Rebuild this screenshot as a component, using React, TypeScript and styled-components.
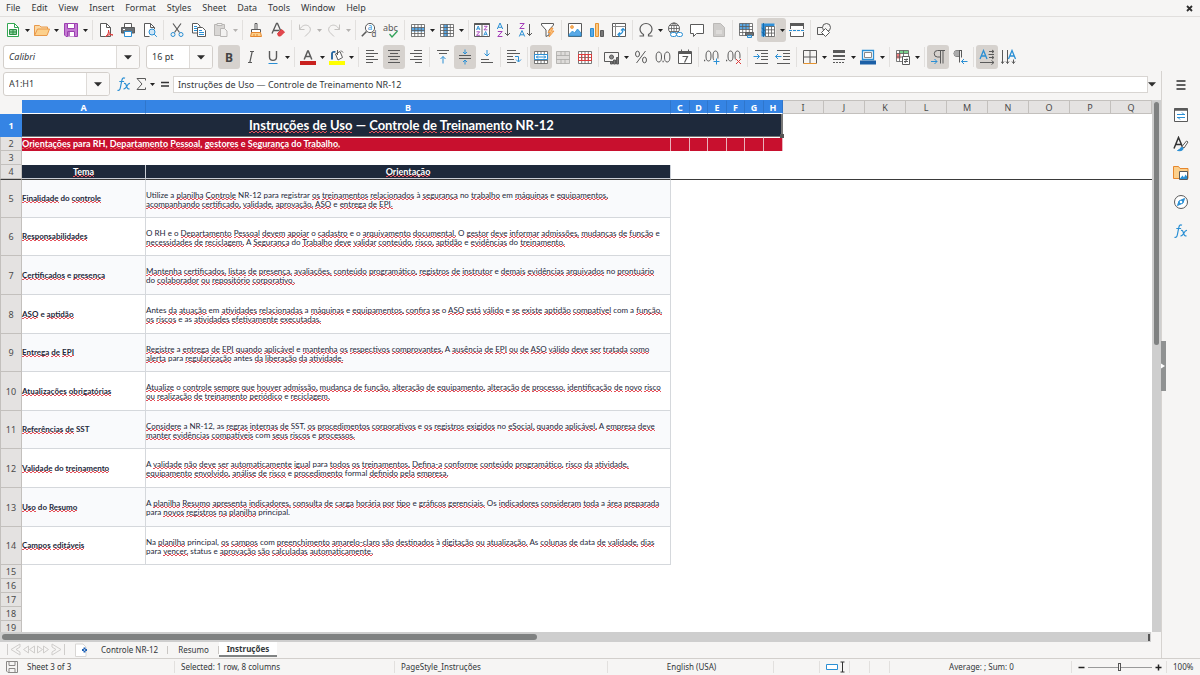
import React from 'react';
import styled, { createGlobalStyle, css } from 'styled-components';

const GlobalStyle = createGlobalStyle`
  *, *::before, *::after { box-sizing: border-box; }
  html, body { margin: 0; height: 100%; }
  body {
    background: #f6f5f4;
    color: #33373a;
    font-family: "Noto Sans", sans-serif;
    font-size: 9px;
    line-height: 12px;
    overflow: hidden;
  }
  button, input, select { font: inherit; color: inherit; margin: 0; padding: 0; border: 0; background: none; outline: none; }
  svg { display: block; flex: none; }
`;

/* ---------- frame ---------- */

const Window = styled.div`
  display: flex;
  flex-direction: column;
  height: 100vh;
`;

const MenuBar = styled.nav`
  display: flex;
  align-items: center;
  flex: none;
  height: 17px;
  padding: 0 6px;
  gap: 11px;
  border-bottom: 1px solid #e1dfdd;
`;

const MenuItem = styled.button`
  white-space: nowrap;
`;

const CloseButton = styled.button`
  margin-left: auto;
`;

const Toolbar = styled.div<{ $height: number }>`
  display: flex;
  align-items: center;
  flex: none;
  height: ${(p) => p.$height}px;
  padding-left: 2px;
`;

const ToolButton = styled.button<{ $on?: boolean; $split?: boolean }>`
  display: flex;
  align-items: center;
  justify-content: center;
  flex: none;
  width: 22px;
  height: 24px;
  border-radius: ${(p) => (p.$split ? '3px 0 0 3px' : '3px')};
  background: ${(p) => (p.$on ? '#d6d2ce' : 'none')};
`;

const Separator = styled.span`
  flex: none;
  width: 1px;
  height: 20px;
  margin: 0 2px;
  background: #e2e0de;
`;

const CaretButton = styled.button<{ $on?: boolean }>`
  display: flex;
  align-items: center;
  justify-content: center;
  flex: none;
  width: 7px;
  height: 24px;
  border-radius: 0 3px 3px 0;
  background: ${(p) => (p.$on ? '#d6d2ce' : 'none')};
  & + ${Separator} { margin-left: 3px; }
`;

const Combo = styled.div<{ $width: number }>`
  display: flex;
  flex: none;
  width: ${(p) => p.$width}px;
  height: 24px;
  margin: 0 5px 0 1px;
  border: 1px solid #d3cfcb;
  border-radius: 3px;
  background: #fff;
  overflow: hidden;
`;

const ComboInput = styled.input<{ $italic?: boolean }>`
  flex: 1;
  min-width: 0;
  padding-left: 5px;
  font-style: ${(p) => (p.$italic ? 'italic' : 'normal')};
`;

const ComboArrow = styled.button`
  display: flex;
  align-items: center;
  justify-content: center;
  width: 23px;
  border-left: 1px solid #dedbd8;
  background: #f9f8f7;
`;

const Lower = styled.div`
  display: flex;
  flex: 1;
  min-height: 0;
`;

const Document = styled.main`
  display: flex;
  flex-direction: column;
  flex: 1;
  min-width: 0;
`;

const FormulaBar = styled.div`
  display: flex;
  align-items: center;
  flex: none;
  height: 29px;
  padding: 0 5px 3px 2px;
`;

const FormulaTool = styled.button`
  display: flex;
  align-items: center;
  justify-content: center;
  width: 17px;
  height: 20px;
`;

const FormulaInput = styled.input`
  flex: 1;
  min-width: 0;
  height: 17px;
  padding-left: 4px;
  border: 1px solid #d8d5d2;
  background: #fff;
`;

const ExpandButton = styled.button`
  display: flex;
  justify-content: center;
  width: 8px;
`;

/* ---------- sheet ---------- */

const SheetArea = styled.div`
  display: flex;
  flex: 1;
  min-height: 0;
`;

const Viewport = styled.div`
  flex: 1;
  min-width: 0;
  overflow: hidden;
  background: #fff;
`;

const Grid = styled.table`
  width: 100%;
  table-layout: fixed;
  border-collapse: separate;
  border-spacing: 0;
  color: #1e293b;
  font-family: Lato, Carlito, sans-serif;
  font-size: 8px;
  line-height: 9px;
  td, th { padding: 0; }
`;

const selectedHeader = css`
  background: #3584e4;
  color: #fff;
  font-weight: 700;
`;

const ColumnHeader = styled.th<{ $selected?: boolean }>`
  height: 14px;
  border: solid #c3c0bd;
  border-width: 1px 1px 1px 0;
  background: #e4e2e1;
  color: #4b4b4b;
  font: 400 9px/11px "Noto Sans", sans-serif;
  ${(p) => p.$selected && selectedHeader}
  ${(p) => p.$selected && 'border-color: #3584e4 #2f76cc #fff #3584e4;'}
`;

const Corner = styled.td`
  background: #f6f5f4;
`;

const RowHeader = styled.th<{ $selected?: boolean }>`
  border: solid #c3c0bd;
  border-width: 0 1px 1px 1px;
  background: #e4e2e1;
  color: #4b4b4b;
  font: 400 9px/11px "Noto Sans", sans-serif;
  ${(p) => p.$selected && selectedHeader}
  ${(p) => p.$selected && 'border-color: #3584e4;'}
`;

const Row = styled.tr<{ $height: number; $frozenEdge?: boolean }>`
  height: ${(p) => p.$height}px;
  ${(p) => p.$frozenEdge && '&& > * { border-top: 1px solid #3a3a3a; }'}
`;

const TitleCell = styled.td`
  position: relative;
  border: solid #777;
  border-width: 0 2px 1px 0;
  background: #1e293b;
  color: #fff;
  font-size: 13px;
  font-weight: 700;
  line-height: 16px;
  text-align: center;
`;

const FillHandle = styled.span`
  position: absolute;
  right: -3px;
  bottom: -2px;
  width: 4px;
  height: 4px;
  background: #555;
`;

const BannerCell = styled.td`
  border: solid #e9b3bb;
  border-width: 1px 1px 0 0;
  border-top-color: #fff;
  background: #c8102e;
  color: #fff;
  font-size: 9px;
  font-weight: 700;
  line-height: 11px;
  vertical-align: top;
  white-space: nowrap;
`;

const HeadCell = styled.td`
  border: solid #c9ced6;
  border-width: 0 1px 1px 0;
  background: #1e293b;
  color: #fff;
  font-size: 9px;
  font-weight: 700;
  line-height: 11px;
  text-align: center;
`;

const BodyCell = styled.td<{ $tinted: boolean; $bold?: boolean }>`
  border: solid #d5d8dc;
  border-width: 0 1px 1px 0;
  background: ${(p) => (p.$tinted ? '#f9fafc' : '#fff')};
  font-weight: ${(p) => (p.$bold ? 700 : 400)};
  white-space: nowrap;
`;

const Lines = styled.div`
  padding-top: 2px;
`;

const Misspelled = styled.span`
  background:
    linear-gradient(90deg, #e4505a 2px, transparent 2px) 0 100% / 4px 1px repeat-x,
    linear-gradient(90deg, transparent 2px, #e4505a 2px) 0 calc(100% - 1px) / 4px 1px repeat-x;
`;

const VerticalTrack = styled.div`
  flex: none;
  width: 9px;
  padding: 2px;
  background: #cecece;
`;

const VerticalThumb = styled.div`
  width: 5px;
  height: 46%;
  border-radius: 3px;
  background: #7f8181;
`;

const HorizontalTrack = styled.div`
  display: flex;
  flex: none;
  justify-content: space-between;
  align-items: center;
  height: 10px;
  margin-right: 10px;
  padding: 0 1px 0 2px;
  background: #cecece;
`;

const HorizontalThumb = styled.div`
  width: 46.6%;
  height: 6px;
  border-radius: 3px;
  background: #7f8181;
`;

const SplitGrip = styled.div`
  width: 2px;
  height: 7px;
  background: #555;
`;

const TabBar = styled.div`
  display: flex;
  flex: none;
  height: 16px;
  padding: 0 0 1px 6px;
`;

const TabNav = styled.button`
  display: flex;
  align-items: center;
  width: 15px;
`;

const AddSheet = styled.button`
  margin: 0 3px 0 9px;
`;

const Tab = styled.button<{ $active?: boolean }>`
  padding: 0 10px;
  font-size: 8px;
  line-height: 15px;
  white-space: nowrap;
  ${(p) =>
    p.$active
      ? 'padding: 0 8px; background: #fff; font-weight: 700; border-bottom: 2px solid #808383; line-height: 13px;'
      : 'background: linear-gradient(#c9c6c3, #c9c6c3) 100% 50% / 1px 8px no-repeat;'}
`;

/* ---------- sidebar and status bar ---------- */

const Sidebar = styled.aside`
  position: relative;
  display: flex;
  flex-direction: column;
  align-items: center;
  flex: none;
  width: 39px;
  padding-top: 2px;
  border-left: 1px solid #d6d3d0;
`;

const SidebarButton = styled.button`
  display: flex;
  align-items: center;
  justify-content: center;
  width: 29px;
  height: 29px;
  &:first-child { height: 24px; margin-bottom: 3px; }
`;

const SidebarHandle = styled.button`
  position: absolute;
  left: -1px;
  top: 46%;
  display: flex;
  align-items: center;
  width: 5px;
  height: 50px;
  background: #909292;
`;

const StatusBar = styled.footer`
  display: grid;
  grid-template-columns: 175px 220fr 213fr 166fr 46px 30px 20px 20px 182fr 95px 33px;
  align-items: center;
  flex: none;
  height: 17px;
  border-top: 1px solid #d2cfcc;
  font-size: 8px;
`;

const StatusCell = styled.div<{ $center?: boolean; $gap?: number }>`
  display: flex;
  align-items: center;
  justify-content: ${(p) => (p.$center ? 'center' : 'flex-start')};
  gap: ${(p) => p.$gap ?? 0}px;
  height: 12px;
  padding: 0 4px 0 6px;
  white-space: nowrap;
  border-right: 1px solid #e2e0de;
  &:last-child { border-right: 0; }
`;

const ZoomRange = styled.input`
  appearance: none;
  flex: 1;
  min-width: 0;
  height: 10px;
  background: linear-gradient(#9a9a9a, #9a9a9a) 0 50% / 100% 1px no-repeat;
  &::-webkit-slider-thumb {
    appearance: none;
    width: 3px;
    height: 8px;
    border: 1px solid #555;
    background: #f6f5f4;
  }
`;

/* ---------- icons ---------- */

const K = '#5a5a5a';
const B = '#2a8fd4';
const R = '#dd3b3b';
const SANS = '"Noto Sans", sans-serif';

const Svg = ({ children, w = 16, h = 16 }: { children: React.ReactNode; w?: number; h?: number }) => (
  <svg width={w} height={h} viewBox={`0 0 ${w} ${h}`} fill="none" stroke={K} strokeWidth="1" aria-hidden="true">
    {children}
  </svg>
);

const Caret = ({ dim, big }: { dim?: boolean; big?: boolean }) =>
  big ? (
    <svg width="8" height="5" viewBox="0 0 8 5" aria-hidden="true"><path d="M0 .3h8L4 4.6z" fill="#2e2e2e" /></svg>
  ) : (
    <svg width="5" height="3" viewBox="0 0 5 3" aria-hidden="true"><path d="M0 0h5L2.500 3z" fill={dim ? '#b5b3b1' : '#222'} /></svg>
  );

const sheetGrid = (color = K) => (
  <path stroke={color} strokeWidth=".8" d="M1.500 2.500h13v12h-13zM1.500 5.500h13M1.500 8.500h13M1.500 11.500h13M4.700 2.500v12M8 2.500v12M11.300 2.500v12" />
);

const icons: Record<string, React.ReactNode> = {
  new: (
    <Svg>
      <path d="M2.500 1.500h7l4 4v9h-11z" fill="#fff" stroke="#34a853" />
      <path d="M9.500 1.500v4h4" stroke="#34a853" />
      <path d="M4.500 7.500h7v5h-7zM4.500 10h7M8 7.500v5" stroke="#2c8f45" fill="#8fd3a1" />
    </Svg>
  ),
  open: (
    <Svg>
      <path d="M.5 13.500v-10h5l1.500 1.500h6.500v3" fill="#fbd9a5" stroke="#e9994a" />
      <path d="M.5 13.500 3.500 7h12l-2.500 6.500z" fill="#fcd08c" stroke="#e9994a" />
    </Svg>
  ),
  save: (
    <Svg>
      <path d="M1.500 1.500h13v13H3l-1.500-1.500z" fill="#c57bd3" stroke="#9c3fb0" />
      <path d="M4.500 1.500h7v5h-7z" fill="#fff" stroke="#9c3fb0" />
      <path d="M4.500 14.500v-5h7v5" fill="#fff" stroke="#9c3fb0" />
      <path d="M6 10v4" stroke="#9c3fb0" strokeWidth="1.500" />
    </Svg>
  ),
  pdf: (
    <Svg>
      <path d="M2.500 1.500h6l4 4v9h-10z" fill="#fff" />
      <path d="M8.500 1.500v4h4" />
      <path d="M7.500 14.500c2-1 3.500-4 3-6.500 0 3 2 5 4.500 5-2.500-1-5 0-7.500 1.500z" stroke={R} fill="#f5b5b5" />
    </Svg>
  ),
  print: (
    <Svg>
      <path d="M4.500 5.500v-4h7v4" fill="#fff" />
      <path d="M1.500 5.500h13v5.500h-13z" fill="#6b6f73" />
      <path d="M4.500 9.500h7v5h-7z" fill="#fff" stroke={B} />
      <path d="M3 7.500h2" stroke="#fff" />
    </Svg>
  ),
  preview: (
    <Svg>
      <path d="M12.500 7V5.500l-4-4h-6v13h5" fill="#fff" />
      <path d="M8.500 1.500v4h4" />
      <circle cx="10" cy="10" r="3" stroke={B} fill="#cfe6f7" />
      <path d="m12.200 12.200 2.600 2.600" stroke={B} />
    </Svg>
  ),
  cut: (
    <Svg>
      <path d="m4 1.500 6.500 9M12 1.500 5.500 10.500" strokeWidth="1.200" />
      <circle cx="4" cy="12.500" r="2" stroke={B} />
      <circle cx="12" cy="12.500" r="2" stroke={B} />
    </Svg>
  ),
  copy: (
    <Svg>
      <path d="M1.500 1.500h5l2.500 2.500v7H1.500z" fill="#fff" />
      <path d="M3 4.500h3M3 6.500h3M3 8.500h3" stroke={B} />
      <path d="M6.500 5.500h5l3 3v6h-8z" fill="#fff" />
      <path d="M8 8.500h3M8 10.500h5M8 12.500h5" stroke={B} />
    </Svg>
  ),
  paste: (
    <Svg>
      <path d="M1.500 2.500h10v11h-10z" fill="#d9d7d5" stroke="#b9b7b5" />
      <path d="M4 1.500h5v2H4z" fill="#f6f5f4" stroke="#b9b7b5" />
      <path d="M7.500 6.500h4l2.500 2.500v5.500H7.500z" fill="#f3f2f1" stroke="#b9b7b5" />
    </Svg>
  ),
  clone: (
    <Svg>
      <path d="M7 1.500h2v6H7z" fill="#fff" />
      <path d="M3.500 7.500h9v3h-9z" fill="#fff" />
      <path d="M3.500 10.500h9l1 4h-11z" fill="#fcd08c" stroke="#e6872d" />
      <path d="M6 14v-2M9 14v-2" stroke="#e6872d" />
    </Svg>
  ),
  clear: (
    <Svg>
      <path d="m2 11.500 4.500-10h1l4 9M3.500 8.500h6" strokeWidth="1.300" />
      <path d="m7.500 11.500 4-4 3 2.500-4 4h-2z" fill="#e2474f" stroke={R} />
    </Svg>
  ),
  undo: (
    <Svg>
      <path d="M2.500 2.500v5h5M2.500 7.500C5 3.500 8 2.500 10.500 3.500c3.500 1.500 3.500 5 1.500 7l-4 4" stroke="#c4c2c0" />
    </Svg>
  ),
  redo: (
    <Svg>
      <path d="M13.500 2.500v5h-5M13.500 7.500C11 3.500 8 2.500 5.500 3.500c-3.500 1.500-3.500 5-1.500 7l4 4" stroke="#c4c2c0" />
    </Svg>
  ),
  find: (
    <Svg>
      <circle cx="9" cy="6" r="4.600" fill="#fff" />
      <path d="M5.500 9.500.8 14.200" strokeWidth="1.600" />
      <text x="6.800" y="8.300" fontSize="8" fill={B} stroke="none" fontFamily={SANS}>a</text>
      <text x="10.500" y="15" fontSize="8" fill={K} stroke="none" fontFamily={SANS}>d</text>
    </Svg>
  ),
  spell: (
    <Svg w={18}>
      <text x="1" y="9" fontSize="9" fill={K} stroke="none" fontFamily={SANS}>abc</text>
      <path d="m7.500 12 2.500 3 5.500-6" stroke="#32a35a" strokeWidth="1.300" />
    </Svg>
  ),
  row: (
    <Svg>
      <path d="M1.500 1.500h13v13h-13z" fill="#fff" stroke="none" />
      <path d="M1.500 5.500h13v4h-13z" fill="#5aa9e6" stroke="none" />
      {sheetGrid()}
    </Svg>
  ),
  col: (
    <Svg>
      <path d="M1.500 2.500h13v12h-13z" fill="#fff" stroke="none" />
      <path d="M5 2.500h4v12H5z" fill="#5aa9e6" stroke="none" />
      {sheetGrid()}
    </Svg>
  ),
  sort: (
    <Svg>
      <path d="M.5 1.500h15v13H.5z" fill="#fff" />
      <path d="M.5 2h15" strokeWidth="2" />
      <path d="M8 2v12" />
      <g strokeWidth=".9">
        <path d="m2.500 8 1.700-4 1.700 4M3 6.800h2.400M9.800 13.500l1.800-4 1.800 4M10.300 12.300h2.600" stroke={B} />
        <path d="M2.500 9.800h3.200l-3.200 3.500h3.400M10 4.300h3.200L10 7.800h3.400" stroke="#a33bb8" />
      </g>
    </Svg>
  ),
  asc: (
    <Svg>
      <path d="M1.300 7 4 1l2.700 6M2.200 5.300h3.600" stroke={B} />
      <path d="M1.800 9.500h4.400l-4.400 5h4.600" stroke="#a33bb8" />
      <path d="M11.500 2v11.500M9 11l2.500 2.500L14 11" />
    </Svg>
  ),
  desc: (
    <Svg>
      <path d="M1.800 1.500h4.400l-4.400 5h4.600" stroke="#a33bb8" />
      <path d="M1.300 14.500 4 8.500l2.700 6M2.200 12.800h3.600" stroke={B} />
      <path d="M11.500 2v11.500M9 11l2.500 2.500L14 11" />
    </Svg>
  ),
  filter: (
    <Svg>
      <path d="M1.500 1.500h12v1.500l-4.500 5v5l-3 1.500V8L1.500 3z" fill="#fff" />
      <path d="m11 6-3 4.500h2.500L9 15l5-6h-2.500l1.500-3z" fill="#fcc07a" stroke="#ee9036" strokeWidth=".8" />
    </Svg>
  ),
  image: (
    <Svg>
      <path d="M1.500 1.500h13v13h-13z" fill="#fff" />
      <circle cx="5" cy="5" r="1.500" fill="#f7b25c" stroke="#ee9036" strokeWidth=".7" />
      <path d="M2 12.500 5.500 9l2 2 3-4 3.500 4v3H2z" fill="#5aa9e6" stroke={B} strokeWidth=".8" />
    </Svg>
  ),
  chart: (
    <Svg>
      <path d="M1.500 6.500h3v8h-3z" fill="#5aa9e6" stroke={B} />
      <path d="M6.500 1.500h3v13h-3z" fill="#fbc883" stroke="#e6932f" />
      <path d="M11.500 8.500h3v6h-3z" fill="#777" />
    </Svg>
  ),
  pivot: (
    <Svg>
      <path d="M1.500 1.500h13v13h-13z" fill="#fff" />
      <path d="M4.500 1.500v13M1.500 4.500h13" stroke="#888" />
      <path d="M7 12.500c3 0 5-2 5-5.500M10 8.500l2-2 2 2M9 10.500l-2 2 2 2" stroke={B} strokeWidth="1.200" />
    </Svg>
  ),
  omega: (
    <Svg>
      <path d="M1.500 14h4v-1.500C3 11 2 9 2 7a6 5.500 0 0 1 12 0c0 2-1 4-3.500 5.500V14h4" strokeWidth="1.200" />
    </Svg>
  ),
  link: (
    <Svg>
      <circle cx="7" cy="6.500" r="5.500" fill="#fff" />
      <path d="M1.500 6.500h11M7 1v11M2.500 3.500h9M2.500 9.500h9" strokeWidth=".8" />
      <ellipse cx="7" cy="6.500" rx="2.600" ry="5.500" strokeWidth=".8" />
      <rect x="3.500" y="10.500" width="6" height="4" rx="2" fill="#fff" stroke={B} />
      <rect x="9.500" y="10.500" width="6" height="4" rx="2" fill="#fff" stroke={B} />
    </Svg>
  ),
  comment: (
    <Svg>
      <path d="M1.500 2.500h13v9H7.500l-3 3v-3h-3z" fill="#fff" />
    </Svg>
  ),
  header: (
    <Svg>
      <path d="M2.500 1.500h7l4 4v9h-11z" fill="#cfcdcb" stroke="#bbb9b7" />
      <path d="M5 8h6v4H5z" fill="#dddbd9" stroke="none" />
    </Svg>
  ),
  area: (
    <Svg>
      <path d="M1.500 1.500h13v12h-13z" fill="#fff" stroke="none" />
      <path d="M1.500 1.500h9.500v6H1.500z" fill="#5aa9e6" stroke="none" />
      <path strokeWidth=".8" d="M1.500 1.500h13v12h-13zM1.500 4.500h13M1.500 7.500h13M1.500 10.500h13M4.700 1.500v12M8 1.500v12M11.300 1.500v12" />
      <path d="M7.500 10.500h8v3h-8z" fill="#6b6f73" />
      <path d="M9.500 13.500h4v2h-4z" fill="#cfe6f7" stroke={B} />
    </Svg>
  ),
  freeze: (
    <Svg>
      <path d="M2.500 2.500h13v12h-13z" fill="#fff" stroke="none" />
      <path d="M1.500 1.500h13v3h-9v10h-4z" fill="#2f8fd8" stroke="none" />
      <path strokeWidth=".8" d="M5.500 4.500h9v10h-9zM5.500 7.800h9M5.500 11.100h9M8.500 4.500v10M11.500 4.500v10" />
      <path d="M3.500 1v14M1.500 6l4 3M1.500 10l4 3" stroke="#125e9c" strokeWidth=".8" />
    </Svg>
  ),
  split: (
    <Svg>
      <path d="M1.500 14.500v-13h13v13z" fill="#fff" />
      <path d="M1 2.500h14" strokeWidth="3" />
      <path d="M0 8.500h16" stroke="#f6f5f4" strokeWidth="3" />
      <path d="M0 8.500h16" stroke={B} strokeDasharray="3 1" />
    </Svg>
  ),
  shapes: (
    <Svg>
      <path d="M1.500 5.500h8v7h-8z" />
      <circle cx="10.500" cy="5.500" r="4" fill="#f6f5f4" />
      <path d="m9.500 6.500 4 4-4 4-4-4z" fill="#fff" />
    </Svg>
  ),
  bold: (
    <Svg><text x="8" y="12.500" textAnchor="middle" fontSize="12" fontWeight="700" fill="#444" stroke="none" fontFamily={SANS}>B</text></Svg>
  ),
  italic: (
    <Svg><path d="M7 2.500h4M5 13.500h4M9.200 2.500 6.800 13.500" strokeWidth="1.200" /></Svg>
  ),
  underline: (
    <Svg>
      <path d="M4.500 2v6c0 4.500 7 4.500 7 0V2" strokeWidth="1.400" />
      <path d="M3.500 14.500h9" stroke={B} />
    </Svg>
  ),
  fontcolor: (
    <Svg>
      <path d="m4.200 10.500 3.500-8.500h.6l3.500 8.500M5.300 7.500h5.400" strokeWidth="1.500" />
      <path d="M0 14h16" stroke="#c9211e" strokeWidth="4" />
    </Svg>
  ),
  highlight: (
    <Svg>
      <path d="m6.500 5 4.500-2.500 2.500 6-4.500 2.500z" fill="#fff" />
      <path d="M8.500 1v5M12 1.500l2 2" />
      <path d="M3 10.500V4.500c0-1.500 1.500-2 3.500-1.500" stroke="#1c5f9c" strokeWidth="1.800" />
      <path d="M0 14h16" stroke="#ffff00" strokeWidth="4" />
    </Svg>
  ),
  left: <Svg><path d="M2 1.500h8M2 4.500h12M2 7.500h8M2 10.500h12M2 13.500h7" /></Svg>,
  center: <Svg><path d="M2 1.500h12M4 4.500h8M2 7.500h12M4 10.500h8M2 13.500h12" /></Svg>,
  right: <Svg><path d="M6 1.500h8M2 4.500h12M6 7.500h8M2 10.500h12M7 13.500h7" /></Svg>,
  top: (
    <Svg>
      <path d="M2 1.500h12M4 4.500h8" />
      <path d="M8 14.500v-7M5.500 10 8 7.500l2.500 2.500" stroke={B} />
    </Svg>
  ),
  middle: (
    <Svg>
      <path d="M2 6.500h12M2 9.500h12" />
      <path d="M8 .5v4.500M6 3l2 2 2-2M8 15.500V11M6 13l2-2 2 2" stroke={B} />
    </Svg>
  ),
  bottom: (
    <Svg>
      <path d="M2 10.500h8M2 13.500h12" />
      <path d="M8 1v6M5.500 4.500 8 7l2.500-2.500" stroke={B} />
    </Svg>
  ),
  wrap: (
    <Svg>
      <path d="M1 1.500h9M1 4.500h13M1 7.500h6M1 10.500h7M1 13.500h9" />
      <path d="M9 7.500h3.500v5M10 10.500l2.500 2.500 2.500-2.500" stroke={B} />
    </Svg>
  ),
  merge: (
    <Svg>
      <path d="M1.500 2.500h13v12h-13z" fill="#fff" stroke="none" />
      {sheetGrid()}
      <path d="M1.500 5.500h13v5h-13z" fill="#fff" stroke={B} />
      <path d="M3 8h10M5 6.500 3.500 8 5 9.500M11 6.500 12.500 8 11 9.500" stroke={B} />
    </Svg>
  ),
  mergeOff: (
    <Svg>
      <path d="M1.500 2.500h13v12h-13z" fill="#dedcda" stroke="none" />
      <path stroke="#aaa8a6" strokeWidth=".8" d="M1.500 2.500h13v12h-13zM1.500 6.500h13M1.500 10.500h13M6 2.500v4M10 2.500v4M6 10.500v4M10 10.500v4" />
    </Svg>
  ),
  unmerge: (
    <Svg>
      <path d="M1.500 2.500h13v12h-13z" fill="#fff" stroke="none" />
      {sheetGrid()}
      <path d="M1.500 5.500h13v6h-13zM4.700 5.500v6M8 5.500v6M11.300 5.500v6" stroke={R} />
    </Svg>
  ),
  currency: (
    <Svg>
      <path d="M.5 3.500h14v9H.5z" />
      <circle cx="7.500" cy="8" r="2" fill="#888" />
      <path d="M9.500 11h2v4h-2zM12.500 8.500h2v6.500h-2zM6.500 12.500h2V15h-2z" fill="#777" />
    </Svg>
  ),
  percent: (
    <Svg>
      <path d="m12.500 2-9 12" />
      <ellipse cx="4.500" cy="5" rx="2" ry="2.800" />
      <ellipse cx="11.500" cy="11" rx="2" ry="2.800" />
    </Svg>
  ),
  number: (
    <Svg>
      <ellipse cx="3.800" cy="8" rx="2.700" ry="5" />
      <ellipse cx="12.200" cy="8" rx="2.700" ry="5" />
      <path d="M7.500 12.500h1.200" strokeWidth="1.300" />
    </Svg>
  ),
  date: (
    <Svg>
      <path d="M1.500 2.500h13v12h-13z" fill="#fff" />
      <path d="M1.500 4h13" strokeWidth="2" />
      <path d="M4.500.5v3M11.500.5v3" />
      <path d="M5.500 7.500h5L7.500 13.500" strokeWidth="1.200" />
    </Svg>
  ),
  decAdd: (
    <Svg>
      <ellipse cx="4.500" cy="7" rx="2.500" ry="5" />
      <ellipse cx="11.500" cy="7" rx="2.500" ry="5" />
      <path d="M0 11.500h1.200" strokeWidth="1.300" />
      <path d="M12.500 9.500v6M9.500 12.500h6" stroke="#f6f5f4" strokeWidth="3" />
      <path d="M12.500 9.500v6M9.500 12.500h6" stroke={B} />
    </Svg>
  ),
  decDel: (
    <Svg>
      <ellipse cx="4.500" cy="7" rx="2.500" ry="5" />
      <ellipse cx="11.500" cy="7" rx="2.500" ry="5" />
      <path d="M0 11.500h1.200" strokeWidth="1.300" />
      <path d="m10 10 5 5M15 10l-5 5" stroke="#f6f5f4" strokeWidth="3" />
      <path d="m10 10 5 5M15 10l-5 5" stroke={R} />
    </Svg>
  ),
  indent: (
    <Svg>
      <path d="M2 1.500h13M8 4.500h7M8 7.500h7M8 10.500h7M2 14.500h13" />
      <path d="M.5 7.500h6M4 5l2.500 2.500L4 10" stroke={B} />
    </Svg>
  ),
  outdent: (
    <Svg>
      <path d="M2 1.500h13M8 4.500h7M8 7.500h7M8 10.500h7M2 14.500h13" />
      <path d="M6.500 7.500h-6M3 5 .5 7.500 3 10" stroke={B} />
    </Svg>
  ),
  borders: (
    <Svg>
      <path d="M1.500 14.500v-13h13v13M8 1.500v13M1.500 8h13" />
      <path d="M1.500 14.500h13" stroke="#e6932f" />
    </Svg>
  ),
  lines: (
    <Svg>
      <path d="M2 2.500h12" strokeWidth="3" />
      <path d="M2 7h12" strokeWidth="2" />
      <path d="M2 10.500h12" />
      <path d="M2 13.500h12" strokeDasharray="2 1" />
    </Svg>
  ),
  linecolor: (
    <Svg w={18}>
      <path d="M3.500 1.500h11v9h-11z" fill="#fff" stroke={B} strokeWidth="1.300" />
      <path d="M5.500 3.500h7v5h-7z" stroke="#888" />
      <path d="M1 13.500h16" stroke="#1b5fa6" strokeWidth="4" />
    </Svg>
  ),
  cond: (
    <Svg>
      <path d="M1.500 1.500h12v11h-12z" fill="#fff" stroke="none" />
      <path d="M4.500 1.500h9v3h-9z" fill="#7bd08d" stroke="none" />
      <path d="M1.500 4.500h4v5h-4z" fill="#ef7b7b" stroke="none" />
      <path d="M1.500 1.500h12v11h-12zM1.500 4.500h12M1.500 8h12M4.500 1.500v11M8.500 1.500v11" strokeWidth=".8" />
      <path d="M7.500 7.500h7v8h-7z" fill="#fff" />
      <path d="M9 10.500h4M9 12.500h4M12 9.500l-2 4.500" />
    </Svg>
  ),
  ltr: (
    <Svg>
      <path d="M15 1.500H7.500a3 3 0 0 0 0 6.500H10M10.500 1.500v13M13 1.500v13" />
      <path d="M1 12.500h6M4.500 10 7 12.500 4.500 15" stroke={B} />
    </Svg>
  ),
  rtl: (
    <Svg>
      <path d="M10 1.500H5a3 3 0 0 0 0 6h2M7.500 1.500v12M9.500 1.500v7" />
      <path d="M5 1.500a3 3 0 0 0 0 6h2v-6z" fill="#aaa" stroke="none" />
      <path d="M15.500 12.500h-6M12 10l-2.500 2.500L12 15" stroke={B} />
    </Svg>
  ),
  horiz: (
    <Svg>
      <path d="M1 10 4.500 1.500 8 10M2.200 7h4.600" stroke={B} strokeWidth="1.300" />
      <path d="M10 2.500h5M10 8.500h5M13 1l2 1.500L13 4M13 7l2 1.500L13 10M1 13.500h14M12.500 11.500l2.500 2-2.500 2M9.500 5.500h5.500" />
    </Svg>
  ),
  vert: (
    <Svg>
      <path d="M7.500 10 11 1.500l3.500 8.500M8.700 7h4.600" stroke={B} strokeWidth="1.300" />
      <path d="M1.500 1v13.500M6.500 1v13.500M0 12.500l1.500 2 1.500-2M5 12.500l1.500 2 1.500-2M12.500 10.500v4M11 12.500l1.500 2 1.500-2" />
    </Svg>
  ),
  fx: (
    <Svg>
      <path d="M9 2.200c-1.800-1-2.800.2-3.200 2.300L4.300 12c-.4 2-1.300 2.800-2.800 2.200M3.300 5.500h4.800" stroke={B} strokeWidth="1.200" />
      <path d="M8 7.500c1.500-.5 2 .5 2.500 2.500s1.200 3.500 3 2.700M14 7.500c-1.500-.3-2.200 1-3.200 2.700S9 13.300 7.500 12.800" stroke={B} strokeWidth="1.200" />
    </Svg>
  ),
  sigma: <Svg><path d="M12.500 4.500v-2H4l5 5.500-5 5.500h8.500v-2" /></Svg>,
  equals: <Svg><path d="M4 6.500h8M4 10h8" stroke="#333" strokeWidth="1.600" /></Svg>,
  menu: <Svg><path d="M3.500 4h9M3.500 8h9M3.500 12h9" stroke="#2e2e2e" strokeWidth="1.500" /></Svg>,
  props: (
    <Svg>
      <path d="M1.500 1.500h13v13h-13z" fill="#fff" />
      <path d="M1.500 2.500h13" strokeWidth="2.500" />
      <path d="M4 7.500h8M4 10.500h8M9 5.500 11 7.500M7 12.500 5 10.500" stroke={B} />
    </Svg>
  ),
  styles: (
    <Svg>
      <path d="M1 12.500 5.500 1.500 9.500 11M2.500 8.500h6" strokeWidth="1.500" stroke="#333" />
      <path d="m9 10.500 4.500-5.500 1.500 1-4 6z" fill="#fff" />
      <path d="M4.500 14.500c2 0 2.500-3.500 5-3 1.500 1.500 0 4-5 3z" fill={B} stroke={B} />
    </Svg>
  ),
  gallery: (
    <Svg>
      <path d="M.5 13.500v-12h5l1.500 2h8v10z" fill="#fcd08c" stroke="#e6872d" />
      <path d="M6.500 6.500h8v8h-8z" fill="#fff" />
      <path d="m7 13.500 2.500-3 1.500 2 1.500-3 1.500 2v2.500H7z" fill={B} stroke="none" />
    </Svg>
  ),
  navigator: (
    <Svg>
      <circle cx="8" cy="8" r="6.500" fill="#fff" />
      <path d="m11.500 4.500-1.500 4.500-5.500 2.500L6 7z" fill={B} stroke={B} />
      <circle cx="8" cy="8" r="1.300" fill="#fff" stroke="none" />
    </Svg>
  ),
};

/* ---------- data ---------- */

type Tool = { icon: string; label: string; on?: boolean; caret?: boolean; dim?: boolean } | '|';

const t = (icon: string, label: string, extra: { on?: boolean; caret?: boolean; dim?: boolean } = {}): Tool => ({ icon, label, ...extra });
const caret = { caret: true };

const standardTools: Tool[] = [
  t('new', 'New', caret), t('open', 'Open', caret), t('save', 'Save', caret), '|',
  t('pdf', 'Export as PDF'), t('print', 'Print'), t('preview', 'Print Preview'), '|',
  t('cut', 'Cut'), t('copy', 'Copy'), t('paste', 'Paste', { caret: true, dim: true }), '|',
  t('clone', 'Clone Formatting'), t('clear', 'Clear Formatting'), '|',
  t('undo', 'Undo', { caret: true, dim: true }), t('redo', 'Redo', { caret: true, dim: true }), '|',
  t('find', 'Find and Replace'), t('spell', 'Spelling'), '|',
  t('row', 'Row', caret), t('col', 'Column', caret), '|',
  t('sort', 'Sort'), t('asc', 'Sort Ascending'), t('desc', 'Sort Descending'), t('filter', 'AutoFilter'), '|',
  t('image', 'Insert Image'), t('chart', 'Insert Chart'), t('pivot', 'Pivot Table'), '|',
  t('omega', 'Special Character', caret), t('link', 'Hyperlink'), t('comment', 'Comment'), t('header', 'Headers and Footers'), '|',
  t('area', 'Print Area'), t('freeze', 'Freeze Rows and Columns', { caret: true, on: true }), t('split', 'Split Window'), '|',
  t('shapes', 'Draw Functions'),
];

const formatTools: Tool[] = [
  t('bold', 'Bold', { on: true }), t('italic', 'Italic'), t('underline', 'Underline', caret), '|',
  t('fontcolor', 'Font Color', caret), t('highlight', 'Background Color', caret), '|',
  t('left', 'Align Left'), t('center', 'Align Center', { on: true }), t('right', 'Align Right'), '|',
  t('top', 'Align Top'), t('middle', 'Center Vertically', { on: true }), t('bottom', 'Align Bottom'), '|',
  t('wrap', 'Wrap Text'), '|',
  t('merge', 'Merge and Center', { on: true }), t('mergeOff', 'Merge Cells'), t('unmerge', 'Unmerge Cells'), '|',
  t('currency', 'Currency', caret), t('percent', 'Percent'), t('number', 'Number'), t('date', 'Date'), '|',
  t('decAdd', 'Add Decimal Place'), t('decDel', 'Delete Decimal Place'), '|',
  t('indent', 'Increase Indent'), t('outdent', 'Decrease Indent'), '|',
  t('borders', 'Borders', caret), t('lines', 'Border Style', caret), t('linecolor', 'Border Color', caret), '|',
  t('cond', 'Conditional Formatting', caret), '|',
  t('ltr', 'Left-To-Right', { on: true }), t('rtl', 'Right-To-Left'), '|',
  t('horiz', 'Text Left to Right', { on: true }), t('vert', 'Text Top to Bottom'),
];

const menus = ['File', 'Edit', 'View', 'Insert', 'Format', 'Styles', 'Sheet', 'Data', 'Tools', 'Window', 'Help'];

const guidance: [string, string[]][] = [
  ['Finalidade do controle', [
    'Utilize a planilha Controle NR-12 para registrar os treinamentos relacionados à segurança no trabalho em máquinas e equipamentos,',
    'acompanhando certificado, validade, aprovação, ASO e entrega de EPI.']],
  ['Responsabilidades', [
    'O RH e o Departamento Pessoal devem apoiar o cadastro e o arquivamento documental. O gestor deve informar admissões, mudanças de função e',
    'necessidades de reciclagem. A Segurança do Trabalho deve validar conteúdo, risco, aptidão e evidências do treinamento.']],
  ['Certificados e presença', [
    'Mantenha certificados, listas de presença, avaliações, conteúdo programático, registros de instrutor e demais evidências arquivados no prontuário',
    'do colaborador ou repositório corporativo.']],
  ['ASO e aptidão', [
    'Antes da atuação em atividades relacionadas a máquinas e equipamentos, confira se o ASO está válido e se existe aptidão compatível com a função,',
    'os riscos e as atividades efetivamente executadas.']],
  ['Entrega de EPI', [
    'Registre a entrega de EPI quando aplicável e mantenha os respectivos comprovantes. A ausência de EPI ou de ASO válido deve ser tratada como',
    'alerta para regularização antes da liberação da atividade.']],
  ['Atualizações obrigatórias', [
    'Atualize o controle sempre que houver admissão, mudança de função, alteração de equipamento, alteração de processo, identificação de novo risco',
    'ou realização de treinamento periódico e reciclagem.']],
  ['Referências de SST', [
    'Considere a NR-12, as regras internas de SST, os procedimentos corporativos e os registros exigidos no eSocial, quando aplicável. A empresa deve',
    'manter evidências compatíveis com seus riscos e processos.']],
  ['Validade do treinamento', [
    'A validade não deve ser automaticamente igual para todos os treinamentos. Defina-a conforme conteúdo programático, risco da atividade,',
    'equipamento envolvido, análise de risco e procedimento formal definido pela empresa.']],
  ['Uso do Resumo', [
    'A planilha Resumo apresenta indicadores, consulta de carga horária por tipo e gráficos gerenciais. Os indicadores consideram toda a área preparada',
    'para novos registros na planilha principal.']],
  ['Campos editáveis', [
    'Na planilha principal, os campos com preenchimento amarelo-claro são destinados à digitação ou atualização. As colunas de data de validade, dias',
    'para vencer, status e aprovação são calculadas automaticamente.']],
];

const knownWords = new Set(
  'a e o à as no em para com do A O As Os Na RH SST, SST NR-12 NR-12, Utilize registrar Antes antes principal, principal. status formal data RH, —'.split(' '),
);

/* ---------- parts ---------- */

const Checked = ({ text }: { text: string }) => (
  <>
    {text.split(' ').map((word, i) => (
      <React.Fragment key={i}>
        {i > 0 && ' '}
        {knownWords.has(word) ? word : <Misspelled>{word}</Misspelled>}
      </React.Fragment>
    ))}
  </>
);

const Tools = ({ items }: { items: Tool[] }) => (
  <>
    {items.map((item, i) =>
      item === '|' ? (
        <Separator key={i} />
      ) : (
        <React.Fragment key={i}>
          <ToolButton aria-label={item.label} $on={item.on} $split={item.caret}>{icons[item.icon]}</ToolButton>
          {item.caret && (
            <CaretButton aria-label={`${item.label} options`} $on={item.on}><Caret dim={item.dim} /></CaretButton>
          )}
        </React.Fragment>
      ),
    )}
  </>
);

const ComboBox = ({ label, value, width, italic }: { label: string; value: string; width: number; italic?: boolean }) => (
  <Combo $width={width}>
    <ComboInput aria-label={label} defaultValue={value} $italic={italic} />
    <ComboArrow aria-label={`${label} list`}><Caret big /></ComboArrow>
  </Combo>
);

const narrow = [19, 18, 19, 18, 19, 19];
const columns = 'ABCDEFGHIJKLMNOPQ'.split('');
const rowHeights = [39, 38, 39, 39, 38];
const rest = columns.length - 2;

const Spreadsheet = () => (
  <Grid>
    <colgroup>
      <col width={22} />
      <col width={124} />
      <col width={525} />
      {narrow.map((w, i) => <col key={i} width={w} />)}
      {columns.slice(8).map((c) => <col key={c} />)}
    </colgroup>
    <thead>
      <tr>
        <Corner />
        {columns.map((c, i) => <ColumnHeader key={c} scope="col" $selected={i < 8}>{c}</ColumnHeader>)}
      </tr>
    </thead>
    <tbody>
      <Row $height={23}>
        <RowHeader scope="row" $selected>1</RowHeader>
        <TitleCell colSpan={8}>
          <Checked text="Instruções de Uso — Controle de Treinamento NR-12" />
          <FillHandle />
        </TitleCell>
        <td colSpan={9} />
      </Row>
      <Row $height={14}>
        <RowHeader scope="row">2</RowHeader>
        <BannerCell colSpan={2}>
          <Checked text="Orientações para RH, Departamento Pessoal, gestores e Segurança do Trabalho." />
        </BannerCell>
        {narrow.map((_, i) => <BannerCell key={i} />)}
        <td colSpan={9} />
      </Row>
      <Row $height={14}>
        <RowHeader scope="row">3</RowHeader>
        <td colSpan={17} />
      </Row>
      <Row $height={14}>
        <RowHeader scope="row">4</RowHeader>
        <HeadCell><Checked text="Tema" /></HeadCell>
        <HeadCell><Checked text="Orientação" /></HeadCell>
        <td colSpan={rest} />
      </Row>
      {guidance.map(([topic, lines], i) => (
        <Row key={topic} $height={rowHeights[i % 5]} $frozenEdge={i === 0}>
          <RowHeader scope="row">{i + 5}</RowHeader>
          <BodyCell $tinted={i % 2 === 0} $bold><Checked text={topic} /></BodyCell>
          <BodyCell $tinted={i % 2 === 0}>
            <Lines>
              {lines.map((line) => <div key={line}><Checked text={line} /></div>)}
            </Lines>
          </BodyCell>
          <td colSpan={rest} />
        </Row>
      ))}
      {[15, 16, 17, 18, 19].map((n) => (
        <Row key={n} $height={14}>
          <RowHeader scope="row">{n}</RowHeader>
          <td colSpan={17} />
        </Row>
      ))}
    </tbody>
  </Grid>
);

const navPaths = [
  'M1.500 1v11M14 1 5 6.500l9 5.500V9L10 6.500 14 4z',
  'M7.500 3 2.500 6.500l5 3.500zM13.500 3l-5 3.500 5 3.500z',
  'M1.500 3l5 3.500-5 3.500zM7.500 3l5 3.500-5 3.500z',
  'M13.500 1v11M1 1l9 5.500L1 12V9l4-2.500L1 4z',
];
const navLabels = ['First Sheet', 'Previous Sheet', 'Next Sheet', 'Last Sheet'];

export default function App() {
  return (
    <>
      <GlobalStyle />
      <Window>
        <MenuBar>
          {menus.map((m) => <MenuItem key={m}>{m}</MenuItem>)}
          <CloseButton aria-label="Close Document">
            <svg width="9" height="9" viewBox="0 0 9 9" aria-hidden="true"><path d="m2 2 5 5M7 2 2 7" stroke="#2e2e2e" strokeWidth="1.800" /></svg>
          </CloseButton>
        </MenuBar>
        <Toolbar $height={26}><Tools items={standardTools} /></Toolbar>
        <Toolbar $height={28}>
          <ComboBox label="Font Name" value="Calibri" width={137} italic />
          <ComboBox label="Font Size" value="16 pt" width={67} />
          <Tools items={formatTools} />
        </Toolbar>
        <Lower>
          <Document>
            <FormulaBar>
              <ComboBox label="Name Box" value="A1:H1" width={107} />
              <FormulaTool aria-label="Function Wizard">{icons.fx}</FormulaTool>
              <FormulaTool aria-label="Select Function">{icons.sigma}</FormulaTool>
              <CaretButton aria-label="Function options"><Caret /></CaretButton>
              <FormulaTool aria-label="Formula">{icons.equals}</FormulaTool>
              <FormulaInput aria-label="Input line" defaultValue="Instruções de Uso — Controle de Treinamento NR-12" />
              <ExpandButton aria-label="Expand Formula Bar"><Caret big /></ExpandButton>
            </FormulaBar>
            <SheetArea>
              <Viewport><Spreadsheet /></Viewport>
              <VerticalTrack><VerticalThumb /></VerticalTrack>
            </SheetArea>
            <HorizontalTrack><HorizontalThumb /><SplitGrip /></HorizontalTrack>
            <TabBar>
              {navPaths.map((d, i) => (
                <TabNav key={d} aria-label={navLabels[i]}>
                  <svg width="15" height="13" viewBox="0 0 15 13" fill="none" stroke="#cfcdcb" aria-hidden="true"><path d={d} /></svg>
                </TabNav>
              ))}
              <AddSheet aria-label="Add Sheet">
                <svg width="13" height="14" viewBox="0 0 13 14" aria-hidden="true">
                  <path d="M.5 1h7.500l3 3v9.500H.5z" fill="#fff" stroke="#d8d6d4" />
                  <path d="M9.500 4.500v5M7 7h5" stroke="#1b5fb4" strokeWidth="2" />
                  <circle cx="9.500" cy="7" r=".8" fill="#fff" />
                </svg>
              </AddSheet>
              <Tab>Controle NR-12</Tab>
              <Tab>Resumo</Tab>
              <Tab $active>Instruções</Tab>
            </TabBar>
          </Document>
          <Sidebar>
            <SidebarButton aria-label="Sidebar Settings">{icons.menu}</SidebarButton>
            <SidebarButton aria-label="Properties">{icons.props}</SidebarButton>
            <SidebarButton aria-label="Styles">{icons.styles}</SidebarButton>
            <SidebarButton aria-label="Gallery">{icons.gallery}</SidebarButton>
            <SidebarButton aria-label="Navigator">{icons.navigator}</SidebarButton>
            <SidebarButton aria-label="Functions">{icons.fx}</SidebarButton>
            <SidebarHandle aria-label="Hide Sidebar">
              <svg width="4" height="6" viewBox="0 0 4 6" aria-hidden="true"><path d="M0 .5 4 3 0 5.500z" fill="#fff" /></svg>
            </SidebarHandle>
          </Sidebar>
        </Lower>
        <StatusBar>
          <StatusCell $gap={9}>
            <svg width="12" height="12" viewBox="0 0 12 12" fill="none" stroke="#8a8886" aria-hidden="true">
              <path d="M.5.5h11v11H2L.5 10zM3 .5v4h6v-4M3 11.500v-4h6v4" />
            </svg>
            <span>Sheet 3 of 3</span>
          </StatusCell>
          <StatusCell>Selected: 1 row, 8 columns</StatusCell>
          <StatusCell>PageStyle_Instruções</StatusCell>
          <StatusCell $center>English (USA)</StatusCell>
          <StatusCell />
          <StatusCell>
            <svg width="19" height="12" viewBox="0 0 19 12" fill="none" aria-hidden="true">
              <path d="M.5 3.500h11v5H.5z" fill="#fff" stroke={B} />
              <path d="M14.500 1h4M14.500 11h4M16.500 1v10" stroke="#333" />
            </svg>
          </StatusCell>
          <StatusCell />
          <StatusCell />
          <StatusCell $center>Average: ; Sum: 0</StatusCell>
          <StatusCell $gap={3}>
            <button aria-label="Zoom Out">
              <svg width="7" height="7" viewBox="0 0 7 7" aria-hidden="true"><path d="M.5 3.500h6" stroke="#222" strokeWidth="1.500" /></svg>
            </button>
            <ZoomRange type="range" aria-label="Zoom" min={0} max={100} defaultValue={49} />
            <button aria-label="Zoom In">
              <svg width="7" height="7" viewBox="0 0 7 7" aria-hidden="true"><path d="M.5 3.500h6M3.500.5v6" stroke="#222" strokeWidth="1.500" /></svg>
            </button>
          </StatusCell>
          <StatusCell>100%</StatusCell>
        </StatusBar>
      </Window>
    </>
  );
}
